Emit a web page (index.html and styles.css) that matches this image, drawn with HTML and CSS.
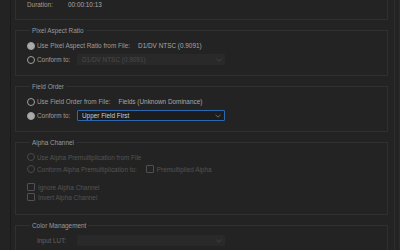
FILE: index.html
```html
<!DOCTYPE html>
<html lang="en">
<head>
    <meta charset="UTF-8">
    <title>Interpret Footage</title>
    <link rel="stylesheet" href="styles.css">
</head>
<body>

    <div class="frame">
        <div class="panel">

            <fieldset class="group group-top">
                <div class="row">
                    <span class="label duration-label">Duration:</span>
                    <span class="value">00:00:10:13</span>
                </div>
            </fieldset>

            <fieldset class="group">
                <legend>Pixel Aspect Ratio</legend>
                <div class="row">
                    <span class="radio on"></span>
                    <span class="label">Use Pixel Aspect Ratio from File:</span>
                    <span class="value">D1/DV NTSC (0.9091)</span>
                </div>
                <div class="row">
                    <span class="radio"></span>
                    <span class="label fixed">Conform to:</span>
                    <div class="select disabled">
                        <span>D1/DV NTSC (0.9091)</span>
                        <svg class="chevron" width="6" height="4" viewBox="0 0 6 4"><path d="M0.5 0.8 L3 3.2 L5.5 0.8" fill="none" stroke="currentColor" stroke-width="1"/></svg>
                    </div>
                </div>
            </fieldset>

            <fieldset class="group">
                <legend>Field Order</legend>
                <div class="row">
                    <span class="radio"></span>
                    <span class="label">Use Field Order from File:</span>
                    <span class="value">Fields (Unknown Dominance)</span>
                </div>
                <div class="row">
                    <span class="radio on"></span>
                    <span class="label fixed">Conform to:</span>
                    <div class="select active">
                        <span>Upper Field First</span>
                        <svg class="chevron" width="6" height="4" viewBox="0 0 6 4"><path d="M0.5 0.8 L3 3.2 L5.5 0.8" fill="none" stroke="currentColor" stroke-width="1"/></svg>
                    </div>
                </div>
            </fieldset>

            <fieldset class="group group-alpha dim">
                <legend>Alpha Channel</legend>
                <div class="row row-alpha">
                    <span class="radio"></span>
                    <span class="label">Use Alpha Premultiplication from File</span>
                </div>
                <div class="row row-alpha">
                    <span class="radio"></span>
                    <span class="label">Conform Alpha Premultiplication to:</span>
                    <span class="check inline-check"></span>
                    <span class="label">Premultiplied Alpha</span>
                </div>
                <div class="checks">
                    <div class="row row-check">
                        <span class="check"></span>
                        <span class="label">Ignore Alpha Channel</span>
                    </div>
                    <div class="row row-check">
                        <span class="check"></span>
                        <span class="label">Invert Alpha Channel</span>
                    </div>
                </div>
            </fieldset>

            <fieldset class="group">
                <legend>Color Management</legend>
                <div class="row indent">
                    <span class="label fixed muted">Input LUT:</span>
                    <div class="select disabled">
                        <span></span>
                        <svg class="chevron" width="6" height="4" viewBox="0 0 6 4"><path d="M0.5 0.8 L3 3.2 L5.5 0.8" fill="none" stroke="currentColor" stroke-width="1"/></svg>
                    </div>
                </div>
            </fieldset>

        </div>
    </div>

</body>
</html>
```

FILE: styles.css
```css
html, body {
    margin: 0;
    height: 100%;
    overflow: hidden;
    background: #232323;
}
body {
    font-family: "Liberation Sans", Arial, sans-serif;
    font-size: 6.4px;
    color: #9e9e9e;
}
.frame {
    width: 399px;
    height: 250px;
    border-right: 1px solid #2b2b2b;
}
.panel {
    margin-left: 10px;
    width: 373px;
    height: 250px;
    padding: 0 6px 0 4px;
    border-left: 1px solid #1a1a1a;
    border-right: 1px solid #2d2d2d;
    display: flex;
    flex-direction: column;
    gap: 6px;
}
.group {
    margin: 0;
    padding: 4px 0 9px 11px;
    border: 1px solid #303030;
    min-width: 0;
    flex-shrink: 0;
}
.group-top {
    margin-top: -14px;
    padding-top: 11px;
    padding-bottom: 8px;
}
.group-alpha {
    padding-bottom: 12px;
}
legend {
    margin-left: 3px;
    padding: 0 2px;
    line-height: 9px;
    color: #9a9a9a;
}
.row {
    display: flex;
    align-items: center;
    height: 13px;
    white-space: nowrap;
}
.row + .row {
    margin-top: 1px;
}
.duration-label {
    width: 33px;
}
.value {
    margin-left: 8px;
    color: #a8a8a8;
}
.label.fixed {
    width: 40px;
}
.muted {
    color: #636363;
}
.indent {
    padding-left: 10px;
}
.radio {
    width: 6px;
    height: 6px;
    border: 1px solid #a0a0a0;
    border-radius: 50%;
    margin-right: 2px;
    flex-shrink: 0;
}
.radio.on {
    background: #aaaaaa;
}
.check {
    width: 6px;
    height: 6px;
    border: 1px solid #505050;
    border-radius: 1px;
    margin-right: 3px;
    flex-shrink: 0;
}
.inline-check {
    margin-left: 9px;
}
.select {
    width: 148px;
    height: 11px;
    box-sizing: border-box;
    display: flex;
    align-items: center;
    justify-content: space-between;
    padding: 0 3px 0 5px;
    border-radius: 1px;
}
.select.disabled {
    background: #292929;
    color: #4a4a4a;
}
.select.active {
    background: #1c1c1c;
    border: 1px solid #2d68ae;
    padding-left: 4px;
    color: #cccccc;
}
.chevron {
    color: #6a6a6a;
}
.select.disabled .chevron {
    color: #424242;
}

/* Alpha channel section is disabled */
.dim .label {
    color: #535353;
}
.dim .radio {
    border-color: #494949;
}
.row.row-alpha {
    height: 12px;
    margin-top: 0;
}
.checks {
    margin-top: 7px;
}
.row.row-check {
    height: 10px;
    margin-top: 0;
}
```
